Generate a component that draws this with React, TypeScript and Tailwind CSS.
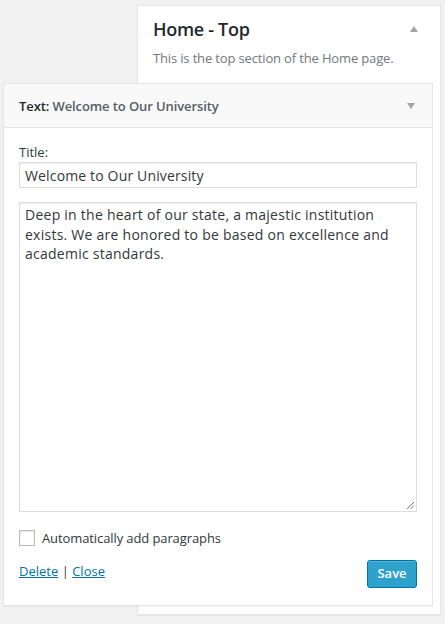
import React from "react";

export default function App() {
  return (
    <div className="w-[445px] h-[624px] bg-[#f1f1f1] relative overflow-hidden" style={{ fontFamily: '"Open Sans", sans-serif' }}>
      {/* back panel */}
      <div className="absolute left-[137px] top-[5px] w-[304px] h-[610px] bg-white border border-[#e5e5e5] shadow-[0_1px_1px_rgba(0,0,0,0.04)]">
        <div className="flex items-start justify-between pl-[15px] pr-[15px] pt-[11px]">
          <div className="text-[18px] font-semibold text-[#23282d] leading-[24px] tracking-[-0.3px]">Home - Top</div>
          <svg width="10" height="8" viewBox="0 0 10 8" className="mt-[8px] mr-[6px]"><polygon points="5,1 9,7 1,7" fill="#a0a5aa" /></svg>
        </div>
        <div className="pl-[15px] mt-[8px] text-[13px] text-[#72777c] leading-[18px] tracking-[-0.15px]">This is the top section of the Home page.</div>
      </div>

      {/* front panel */}
      <div className="absolute left-[3px] top-[83px] w-[430px] h-[523px] bg-white border border-[#e5e5e5] shadow-[0_1px_1px_rgba(0,0,0,0.04)] flex flex-col">
        <div className="h-[44px] bg-[#f9f9f9] border-b border-[#e5e5e5] flex items-center justify-between pl-[15px] pr-[16px]">
          <div className="text-[13px] font-semibold leading-[18px] text-[#23282d] tracking-[-0.1px]">
            Text: <span className="text-[#555d66]">Welcome to Our University</span>
          </div>
          <svg width="10" height="8" viewBox="0 0 10 8"><polygon points="1,1 9,1 5,7" fill="#a0a5aa" /></svg>
        </div>
        <div className="px-[15px] pt-[15px] flex flex-col">
          <div className="text-[13px] text-[#32373c] leading-[18px]">Title:</div>
          <div className="mt-[1px] h-[26px] border border-[#dddddd] shadow-[inset_0_1px_2px_rgba(0,0,0,0.07)] flex items-center px-[5px] text-[14px] text-[#32373c] tracking-[0.15px]">
            Welcome to Our University
          </div>
          <div className="mt-[14px] h-[310px] border border-[#dddddd] shadow-[inset_0_1px_2px_rgba(0,0,0,0.07)] px-[5px] pt-[2px] text-[14px] leading-[19.5px] text-[#32373c] tracking-[0.25px] relative">
            Deep in the heart of our state, a majestic institution exists. We are honored to be based on excellence and academic standards.
            <svg width="9" height="9" viewBox="0 0 9 9" className="absolute right-[1px] bottom-[1px]">
              <line x1="1" y1="8" x2="8" y2="1" stroke="#777" strokeWidth="1" />
              <line x1="4.5" y1="8" x2="8" y2="4.5" stroke="#777" strokeWidth="1" />
            </svg>
          </div>
          <div className="mt-[17px] flex items-center">
            <div className="w-[16px] h-[16px] border border-[#b4b9be] shadow-[inset_0_1px_2px_rgba(0,0,0,0.1)]" />
            <span className="ml-[7px] text-[13px] text-[#32373c] leading-[18px] tracking-[-0.1px]">Automatically add paragraphs</span>
          </div>
          <div className="mt-[13px] flex items-start justify-between">
            <div className="text-[13px] leading-[18px] text-[#32373c] mt-[2px]">
              <a className="text-[#0073aa] underline">Delete</a> | <a className="text-[#0073aa] underline">Close</a>
            </div>
            <div className="w-[50px] h-[28px] rounded-[3px] bg-[#2ea2cc] border border-[#0074a2] shadow-[inset_0_1px_0_rgba(120,200,230,0.5)] flex items-center justify-center text-white text-[13px] font-semibold">
              Save
            </div>
          </div>
        </div>
      </div>
    </div>
  );
}
